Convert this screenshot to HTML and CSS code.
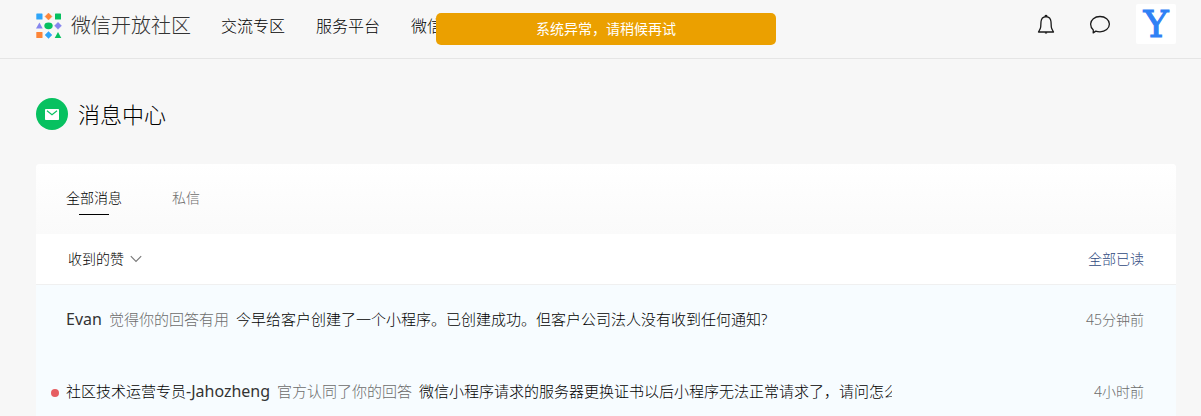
FILE: index.html
```
<!DOCTYPE html>
<html lang="zh-CN">
<head>
<meta charset="utf-8">
<meta name="viewport" content="width=device-width, initial-scale=1">
<title>消息中心 - 微信开放社区</title>
<link rel="stylesheet" href="styles.css">
</head>
<body>
<header class="header">
  <a class="brand" href="#">
    <svg class="brand-mark" viewBox="0 0 26 26" aria-hidden="true">
      <rect x="0.3" y="0.5" width="6.2" height="6" rx="0.6" fill="#2fa5f8"/>
      <path d="M12.5 0L16 3.5 12.5 7 9 3.5Z" fill="#fd8538" stroke="#fd8538" stroke-width=".4" stroke-linejoin="round"/>
      <rect x="19" y="0.5" width="6" height="6" rx="0.6" fill="#07c160"/>
      <path d="M3.4 9.5L6.7 15.5H0Z" fill="#8585ee"/>
      <ellipse cx="12.5" cy="12.8" rx="4.2" ry="3.4" fill="#07c160"/>
      <path d="M22 9.3L25.5 12.8 22 16.3 18.5 12.8Z" fill="#8585ee" stroke="#8585ee" stroke-width=".4" stroke-linejoin="round"/>
      <rect x="0.3" y="19" width="6.2" height="6" rx="0.6" fill="#fd8538"/>
      <path d="M12.5 18.5L16 22 12.5 25.5 9 22Z" fill="#2fa5f8" stroke="#2fa5f8" stroke-width=".4" stroke-linejoin="round"/>
      <path d="M22 19L25.3 25H18.7Z" fill="#07c160"/>
    </svg>
    <span>微信开放社区</span>
  </a>
  <nav class="nav">
    <a href="#">交流专区</a>
    <a href="#">服务平台</a>
    <a href="#">微信学堂</a>
  </nav>
  <div class="tools">
    <button class="icon-button" type="button" aria-label="通知">
      <svg width="18" height="22" viewBox="0 0 18 22" fill="none" stroke="#1a1a1a" stroke-width="1.3" stroke-linejoin="round">
        <path d="M9 3.6C5.8 3.8 4.2 6 4 8.8L3.7 14C3.5 15.8 2.5 17.2 1.5 19H16.5C15.5 17.2 14.5 15.8 14.3 14L14 8.8C13.8 6 12.2 3.8 9 3.6Z"/>
        <path d="M7.8 3.6Q9 1.4 10.2 3.6M7.9 19.8H10.1"/>
      </svg>
    </button>
    <button class="icon-button" type="button" aria-label="私信">
      <svg width="22" height="22" viewBox="0 0 22 22" fill="none" stroke="#1a1a1a" stroke-width="1.3" stroke-linejoin="round">
        <path d="M11 3.5C16.3 3.5 20.4 6.8 20.4 11.1S16.3 18.8 11 18.8C9.4 18.8 8.1 18.6 6.8 18.1L4.2 19.9 4.3 16.9C2.5 15.4 1.6 13.4 1.6 11.1 1.6 6.8 5.7 3.5 11 3.5Z"/>
      </svg>
    </button>
    <a class="avatar" href="#" aria-label="个人主页">Y</a>
  </div>
  <div class="toast" role="alert">系统异常，请稍候再试</div>
</header>

<main class="main">
  <h1 class="title">
    <svg class="title-icon" viewBox="0 0 32 32" aria-hidden="true">
      <circle cx="16" cy="16" r="16" fill="#07c160"/>
      <rect x="9" y="11" width="14" height="11" rx="0.8" fill="#fff"/>
      <path d="M11 12.8L16 16.7 21 12.8" fill="none" stroke="#07c160" stroke-width="1.1"/>
    </svg>
    消息中心
  </h1>

  <section class="card">
    <nav class="tabs">
      <a class="tab tab-active" href="#">全部消息</a>
      <a class="tab" href="#">私信</a>
    </nav>
    <div class="filter-bar">
      <button class="filter" type="button">收到的赞
        <svg width="12" height="8" viewBox="0 0 12 8" fill="none" stroke="#777" stroke-width="1.1"><path d="M.8 1.2L6 6.5 11.2 1.2"/></svg>
      </button>
      <a class="read-all" href="#">全部已读</a>
    </div>
    <ul class="messages">
      <li class="message">
        <div class="message-text"><a class="user" href="#"><span class="latin">Evan</span></a><span class="action">觉得你的回答有用</span><a class="topic" href="#">今早给客户创建了一个小程序。已创建成功。但客户公司法人没有收到任何通知?</a></div>
        <time class="time">45分钟前</time>
      </li>
      <li class="message unread">
        <div class="message-text"><a class="user" href="#">社区技术运营专员<span class="latin">-Jahozheng</span></a><span class="action">官方认同了你的回答</span><a class="topic" href="#">微信小程序请求的服务器更换证书以后小程序无法正常请求了，请问怎么</a></div>
        <time class="time">4小时前</time>
      </li>
    </ul>
  </section>
</main>
</body>
</html>
```
FILE: styles.css
```
* {
  box-sizing: border-box;
}

body {
  margin: 0;
  background: #f7f7f7;
  color: #000;
  font-family: "Noto Sans", "Noto Sans CJK SC", sans-serif;
  font-size: 14px;
  font-weight: 300;
  line-height: 20px;
}

a {
  color: inherit;
  text-decoration: none;
}

button {
  padding: 0;
  border: 0;
  background: none;
  color: inherit;
  font: inherit;
  cursor: pointer;
}

svg {
  display: block;
  flex: none;
}

.header {
  position: relative;
  display: flex;
  align-items: flex-start;
  padding: 4px 25px 10px 36px;
  border-bottom: 1px solid #e5e5e5;
}

.brand,
.nav {
  display: flex;
  align-items: center;
  height: 44px;
  white-space: nowrap;
}

.brand {
  gap: 9px;
  margin-right: 30px;
  color: #333;
  font-size: 20px;
}

.brand-mark {
  width: 26px;
  height: 26px;
}

.nav {
  gap: 31px;
  font-size: 16px;
}

.tools {
  display: flex;
  align-items: center;
  margin-left: auto;
}

.icon-button {
  display: flex;
  margin-right: 34px;
}

.icon-button + .icon-button {
  margin-right: 25px;
}

.avatar {
  width: 40px;
  height: 40px;
  border-radius: 2px;
  background: #fff;
  color: #2f80f5;
  font: 38px/40px "DejaVu Serif", serif;
  -webkit-text-stroke: 1px #2f80f5;
  text-align: center;
}

.toast {
  position: absolute;
  top: 13px;
  left: 436px;
  width: 340px;
  padding: 6px 16px;
  border-radius: 5px;
  background: #eba000;
  color: #fff;
  font-weight: 400;
  text-align: center;
}

.main {
  padding: 39px 25px 0 36px;
}

.title {
  display: flex;
  align-items: center;
  gap: 10px;
  margin: 0 0 34px;
  font-size: 22px;
  font-weight: 300;
  line-height: 32px;
}

.title-icon {
  width: 32px;
  height: 32px;
}

.card {
  overflow: hidden;
  border-radius: 4px 4px 0 0;
  background: #fff;
}

.tabs {
  display: flex;
  gap: 50px;
  padding: 24px 30px 19px;
  background: linear-gradient(#fff, #fafafa);
}

.tab {
  display: flex;
  flex-direction: column;
  align-items: center;
  height: 27px;
  color: #6c6c6c;
}

.tab-active {
  color: #000;
}

.tab-active::after {
  width: 30px;
  height: 1px;
  margin-top: 6px;
  background: #000;
  content: "";
}

.filter-bar {
  display: flex;
  align-items: center;
  justify-content: space-between;
  padding: 15px 32px;
  border-bottom: 1px solid #f0f0f0;
}

.filter {
  display: flex;
  align-items: center;
  gap: 6px;
}

.read-all {
  color: #2f4880;
}

.messages {
  margin: 0;
  padding: 0;
  background: #f7fcff;
  list-style: none;
}

.message {
  position: relative;
  display: flex;
  align-items: baseline;
  justify-content: space-between;
  padding: 22px 32px 26px 30px;
}

.unread::before {
  position: absolute;
  left: 15px;
  top: 32px;
  width: 8px;
  height: 8px;
  border-radius: 50%;
  background: #e65e62;
  content: "";
}

.message-text {
  display: flex;
  gap: 7px;
  overflow: hidden;
  width: 77%;
  max-width: 826px;
  font-size: 15px;
  line-height: 24px;
  white-space: nowrap;
}

.latin {
  color: #333;
  font-size: 16px;
  font-weight: 400;
}

.action,
.time {
  color: #6c6c6c;
}
```
